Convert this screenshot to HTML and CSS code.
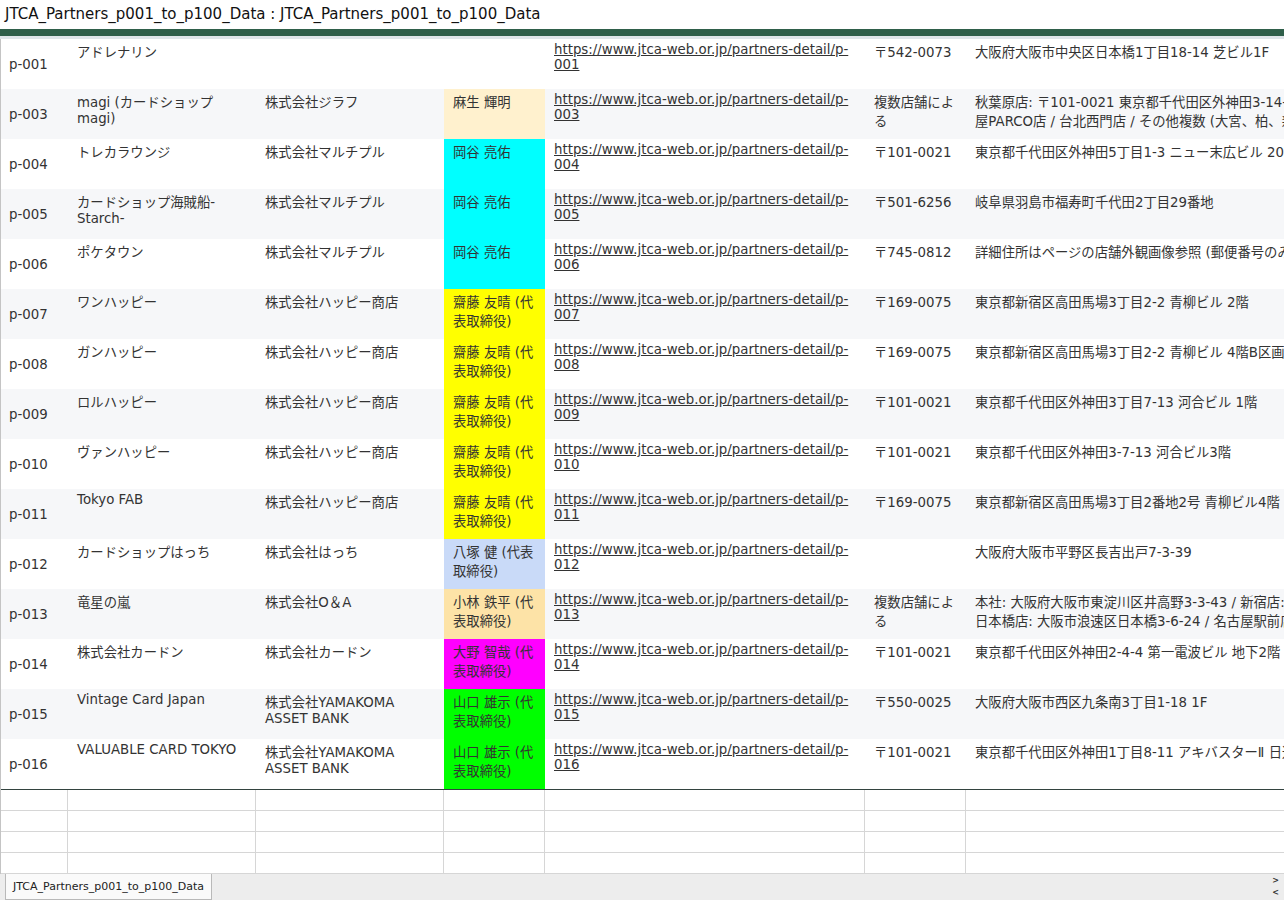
FILE: index.html
```html
<!DOCTYPE html>
<html lang="ja">

<head>
  <meta charset="UTF-8" />
  <meta name="viewport" content="width=device-width, initial-scale=1.0" />
  <link rel="stylesheet" href="styles.css">
</head>

<body>
  <div class="titlebar">JTCA_Partners_p001_to_p100_Data : JTCA_Partners_p001_to_p100_Data</div>
  <div class="band"></div>

  <div class="sheet">
    <div class="data">
      <div class="row">
        <div class="cell id">p-001</div>
        <div class="cell">アドレナリン</div>
        <div class="cell"></div>
        <div class="cell rep"></div>
        <div class="cell url"><a href="#">https://www.jtca-web.or.jp/partners-detail/p-001</a></div>
        <div class="cell">〒542-0073</div>
        <div class="cell addr">大阪府大阪市中央区日本橋1丁目18-14 芝ビル1F</div>
      </div>
      <div class="row">
        <div class="cell id">p-003</div>
        <div class="cell">magi (カードショップ magi)</div>
        <div class="cell">株式会社ジラフ</div>
        <div class="cell rep beige">麻生 輝明</div>
        <div class="cell url"><a href="#">https://www.jtca-web.or.jp/partners-detail/p-003</a></div>
        <div class="cell">複数店舗による</div>
        <div class="cell addr">秋葉原店: 〒101-0021 東京都千代田区外神田3-14-3 2F / 名古<br>屋PARCO店 / 台北西門店 / その他複数 (大宮、柏、新潟)</div>
      </div>
      <div class="row">
        <div class="cell id">p-004</div>
        <div class="cell">トレカラウンジ</div>
        <div class="cell">株式会社マルチプル</div>
        <div class="cell rep cyan">岡谷 亮佑</div>
        <div class="cell url"><a href="#">https://www.jtca-web.or.jp/partners-detail/p-004</a></div>
        <div class="cell">〒101-0021</div>
        <div class="cell addr">東京都千代田区外神田5丁目1-3 ニュー末広ビル 203</div>
      </div>
      <div class="row">
        <div class="cell id">p-005</div>
        <div class="cell">カードショップ海賊船-<br>Starch-</div>
        <div class="cell">株式会社マルチプル</div>
        <div class="cell rep cyan">岡谷 亮佑</div>
        <div class="cell url"><a href="#">https://www.jtca-web.or.jp/partners-detail/p-005</a></div>
        <div class="cell">〒501-6256</div>
        <div class="cell addr">岐阜県羽島市福寿町千代田2丁目29番地</div>
      </div>
      <div class="row">
        <div class="cell id">p-006</div>
        <div class="cell">ポケタウン</div>
        <div class="cell">株式会社マルチプル</div>
        <div class="cell rep cyan">岡谷 亮佑</div>
        <div class="cell url"><a href="#">https://www.jtca-web.or.jp/partners-detail/p-006</a></div>
        <div class="cell">〒745-0812</div>
        <div class="cell addr">詳細住所はページの店舗外観画像参照 (郵便番号のみ記載)</div>
      </div>
      <div class="row">
        <div class="cell id">p-007</div>
        <div class="cell">ワンハッピー</div>
        <div class="cell">株式会社ハッピー商店</div>
        <div class="cell rep yellow">齋藤 友晴 (代表取締役)</div>
        <div class="cell url"><a href="#">https://www.jtca-web.or.jp/partners-detail/p-007</a></div>
        <div class="cell">〒169-0075</div>
        <div class="cell addr">東京都新宿区高田馬場3丁目2-2 青柳ビル 2階</div>
      </div>
      <div class="row">
        <div class="cell id">p-008</div>
        <div class="cell">ガンハッピー</div>
        <div class="cell">株式会社ハッピー商店</div>
        <div class="cell rep yellow">齋藤 友晴 (代表取締役)</div>
        <div class="cell url"><a href="#">https://www.jtca-web.or.jp/partners-detail/p-008</a></div>
        <div class="cell">〒169-0075</div>
        <div class="cell addr">東京都新宿区高田馬場3丁目2-2 青柳ビル 4階B区画</div>
      </div>
      <div class="row">
        <div class="cell id">p-009</div>
        <div class="cell">ロルハッピー</div>
        <div class="cell">株式会社ハッピー商店</div>
        <div class="cell rep yellow">齋藤 友晴 (代表取締役)</div>
        <div class="cell url"><a href="#">https://www.jtca-web.or.jp/partners-detail/p-009</a></div>
        <div class="cell">〒101-0021</div>
        <div class="cell addr">東京都千代田区外神田3丁目7-13 河合ビル 1階</div>
      </div>
      <div class="row">
        <div class="cell id">p-010</div>
        <div class="cell">ヴァンハッピー</div>
        <div class="cell">株式会社ハッピー商店</div>
        <div class="cell rep yellow">齋藤 友晴 (代表取締役)</div>
        <div class="cell url"><a href="#">https://www.jtca-web.or.jp/partners-detail/p-010</a></div>
        <div class="cell">〒101-0021</div>
        <div class="cell addr">東京都千代田区外神田3-7-13 河合ビル3階</div>
      </div>
      <div class="row">
        <div class="cell id">p-011</div>
        <div class="cell">Tokyo FAB</div>
        <div class="cell">株式会社ハッピー商店</div>
        <div class="cell rep yellow">齋藤 友晴 (代表取締役)</div>
        <div class="cell url"><a href="#">https://www.jtca-web.or.jp/partners-detail/p-011</a></div>
        <div class="cell">〒169-0075</div>
        <div class="cell addr">東京都新宿区高田馬場3丁目2番地2号 青柳ビル4階</div>
      </div>
      <div class="row">
        <div class="cell id">p-012</div>
        <div class="cell">カードショップはっち</div>
        <div class="cell">株式会社はっち</div>
        <div class="cell rep blue">八塚 健 (代表取締役)</div>
        <div class="cell url"><a href="#">https://www.jtca-web.or.jp/partners-detail/p-012</a></div>
        <div class="cell"></div>
        <div class="cell addr">大阪府大阪市平野区長吉出戸7-3-39</div>
      </div>
      <div class="row">
        <div class="cell id">p-013</div>
        <div class="cell">竜星の嵐</div>
        <div class="cell">株式会社O＆A</div>
        <div class="cell rep orange">小林 鉄平 (代表取締役)</div>
        <div class="cell url"><a href="#">https://www.jtca-web.or.jp/partners-detail/p-013</a></div>
        <div class="cell">複数店舗による</div>
        <div class="cell addr">本社: 大阪府大阪市東淀川区井高野3-3-43 / 新宿店: 東京都新宿区西新宿7-9-15 /<br>日本橋店: 大阪市浪速区日本橋3-6-24 / 名古屋駅前店: 名古屋市中村区名駅4-2-28</div>
      </div>
      <div class="row">
        <div class="cell id">p-014</div>
        <div class="cell">株式会社カードン</div>
        <div class="cell">株式会社カードン</div>
        <div class="cell rep magenta">大野 智哉 (代表取締役)</div>
        <div class="cell url"><a href="#">https://www.jtca-web.or.jp/partners-detail/p-014</a></div>
        <div class="cell">〒101-0021</div>
        <div class="cell addr">東京都千代田区外神田2-4-4 第一電波ビル 地下2階</div>
      </div>
      <div class="row">
        <div class="cell id">p-015</div>
        <div class="cell">Vintage Card Japan</div>
        <div class="cell">株式会社YAMAKOMA ASSET BANK</div>
        <div class="cell rep green">山口 雄示 (代表取締役)</div>
        <div class="cell url"><a href="#">https://www.jtca-web.or.jp/partners-detail/p-015</a></div>
        <div class="cell">〒550-0025</div>
        <div class="cell addr">大阪府大阪市西区九条南3丁目1-18 1F</div>
      </div>
      <div class="row">
        <div class="cell id">p-016</div>
        <div class="cell">VALUABLE CARD TOKYO</div>
        <div class="cell">株式会社YAMAKOMA ASSET BANK</div>
        <div class="cell rep green">山口 雄示 (代表取締役)</div>
        <div class="cell url"><a href="#">https://www.jtca-web.or.jp/partners-detail/p-016</a></div>
        <div class="cell">〒101-0021</div>
        <div class="cell addr">東京都千代田区外神田1丁目8-11 アキバスターⅡ 日通ビル 5F</div>
      </div>
    </div>

    <div class="blank">
      <div class="row"><div></div><div></div><div></div><div></div><div></div><div></div><div></div></div>
      <div class="row"><div></div><div></div><div></div><div></div><div></div><div></div><div></div></div>
      <div class="row"><div></div><div></div><div></div><div></div><div></div><div></div><div></div></div>
      <div class="row"><div></div><div></div><div></div><div></div><div></div><div></div><div></div></div>
    </div>
  </div>

  <div class="tabbar">
    <div class="tab">JTCA_Partners_p001_to_p100_Data</div>
    <div class="scroller">
      <span>&gt;</span>
      <span>&lt;</span>
    </div>
  </div>
</body>

</html>
```

FILE: styles.css
```css
body {
  margin: 0;
  width: 1284px;
  height: 900px;
  overflow: hidden;
  background: #fff;
  color: #333;
  font-family: "DejaVu Sans", "Noto Sans CJK JP", sans-serif;
}

.titlebar {
  height: 29px;
  line-height: 29px;
  padding-left: 5px;
  font-size: 15px;
  color: #111;
  white-space: nowrap;
}

.band {
  height: 7px;
  background-color: #2f5f4a;
  border-bottom: 3px solid #dfe5ea;
}

.sheet {
  border-left: 1px solid #c4c4c4;
  width: 1700px;
}

.row {
  display: grid;
  grid-template-columns: 67px 188px 188px 101px 320px 101px 735px;
}

.data .row {
  height: 50px;
  font-size: 13.33px;
  line-height: normal;
}

.data .row:nth-child(even) {
  background-color: #f6f7f9;
}

.cell {
  padding: 3px 9px;
  overflow: hidden;
}

.cell.id {
  display: flex;
  align-items: center;
  padding: 4px 8px;
}

.cell.url {
  word-break: break-all;
}

.cell.url a {
  color: #333;
  text-decoration: underline;
}

.cell.addr {
  white-space: nowrap;
}

.rep.beige {
  background-color: #fff1ce;
}

.rep.cyan {
  background-color: #00ffff;
}

.rep.yellow {
  background-color: #ffff00;
}

.rep.blue {
  background-color: #c9daf8;
}

.rep.orange {
  background-color: #fde3a7;
}

.rep.magenta {
  background-color: #ff00ff;
}

.rep.green {
  background-color: #00ff00;
}

.blank {
  border-top: 1px solid #33433f;
}

.blank .row {
  height: 20px;
  border-bottom: 1px solid #d6d6d6;
}

.blank .row div {
  border-right: 1px solid #d6d6d6;
}

.tabbar {
  display: flex;
  justify-content: space-between;
  height: 26px;
  background-color: #ededed;
}

.tab {
  margin-left: 5px;
  padding: 0 7px;
  line-height: 25px;
  font-size: 11px;
  color: #222;
  background-color: #fafafa;
  border: 1px solid #b9b9b9;
  border-top: none;
  white-space: nowrap;
}

.scroller {
  display: flex;
  flex-direction: column;
  align-items: center;
  padding: 1px 5px 0 0;
  font-size: 8px;
  font-weight: bold;
  line-height: 12px;
  color: #333;
}
```
